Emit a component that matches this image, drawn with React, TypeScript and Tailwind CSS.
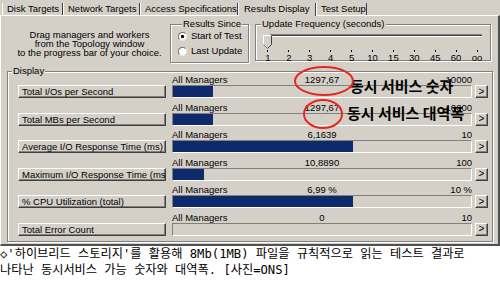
import React from "react";

interface MetricRow {
  name: string;
  value: string;
  max: string;
  fill: number;
}

const rows: MetricRow[] = [
  { name: "Total I/Os per Second", value: "1297,67", max: "10000", fill: 40 },
  { name: "Total MBs per Second", value: "1297,67", max: "10000", fill: 40 },
  { name: "Average I/O Response Time (ms)", value: "6,1639", max: "10", fill: 180 },
  { name: "Maximum I/O Response Time (ms)", value: "10,8890", max: "100", fill: 31 },
  { name: "% CPU Utilization (total)", value: "6,99 %", max: "10 %", fill: 180 },
  { name: "Total Error Count", value: "0", max: "10", fill: 0 },
];

const tabs = [
  { label: "Disk Targets", w: "w-[61px]" },
  { label: "Network Targets", w: "w-[77px]" },
  { label: "Access Specifications", w: "w-[98px]" },
  { label: "Results Display", w: "w-[78px]", active: true },
  { label: "Test Setup", w: "w-[51px]" },
];

const ticks = ["1", "2", "3", "4", "5", "10", "15", "30", "45", "60", "oo"];

const raised =
  "border border-t-white border-l-white border-r-[#404040] border-b-[#404040] shadow-[inset_-1px_-1px_0_#808080]";
const etched = "border border-[#808080] shadow-[inset_1px_1px_0_#fff,1px_1px_0_#fff]";

function Radio({ checked }: { checked?: boolean }) {
  return (
    <svg width="9" height="9" viewBox="0 0 12 12">
      <circle cx="6" cy="6" r="5" fill="#fff" />
      <path d="M2.1 9.9 A5.5 5.5 0 0 1 9.9 2.1" fill="none" stroke="#707070" strokeWidth="1.4" />
      <path d="M9.9 2.1 A5.5 5.5 0 0 1 2.1 9.9" fill="none" stroke="#e8e6e1" strokeWidth="1.4" />
      {checked && <circle cx="6" cy="6" r="2.2" fill="#000" />}
    </svg>
  );
}

function Thumb() {
  return (
    <svg width="9" height="14" viewBox="0 0 9 14">
      <polygon points="0.5,0.5 8.5,0.5 8.5,9.5 4.5,13.5 0.5,9.5" fill="#d4d0c8" />
      <polyline points="0.5,9.5 0.5,0.5 8.5,0.5" fill="none" stroke="#fff" />
      <polyline points="8.5,0.5 8.5,9.5 4.5,13.5" fill="none" stroke="#404040" />
      <polyline points="0.5,9.5 4.5,13.5" fill="none" stroke="#808080" />
    </svg>
  );
}

function Row({ row }: { row: MetricRow }) {
  return (
    <div className="flex h-[23px] items-end">
      <div className={`${raised} h-[13px] w-[148px] overflow-hidden whitespace-nowrap pl-[3px] leading-[11px]`}>
        {row.name}
      </div>
      <div className="ml-[6px] flex w-[300px] flex-col">
        <div className="flex h-[10px] leading-[10px] whitespace-nowrap">
          <span className="w-[100px]">All Managers</span>
          <span className="w-[100px] text-center">{row.value}</span>
          <span className="w-[100px] text-right">{row.max}</span>
        </div>
        <div className="h-[13px] border border-t-[#808080] border-l-[#808080] border-r-white border-b-white">
          <div className="h-full bg-[#0c2a6c]" style={{ width: row.fill }} />
        </div>
      </div>
      <div className={`${raised} ml-[3px] flex h-[13px] w-[13px] items-center justify-center text-[10px] leading-none`}>
        &gt;
      </div>
    </div>
  );
}

export default function App() {
  return (
    <div className="relative h-[288px] w-[500px] overflow-hidden bg-white font-['Liberation_Sans',Arial,sans-serif] text-[9.5px] text-black">
      <div className="flex h-[246px] flex-col bg-[#d4d0c8]">
        {/* tab strip */}
        <div className="flex h-[15px] items-end pl-[2px]">
          {tabs.map((t) => (
            <div
              key={t.label}
              className={`${t.w} h-[12px] whitespace-nowrap border-l border-r border-l-white border-r-[#404040] pl-[4px] leading-[11px] ${
                t.active ? "relative z-10 -mb-px h-[13px] bg-[#d4d0c8] pl-[5px]" : ""
              }`}
            >
              {t.label}
            </div>
          ))}
        </div>

        <div className="flex flex-1 flex-col border-t border-l border-t-white border-l-white border-r-2 border-b-2 border-r-[#505050] border-b-[#505050]">
          {/* top area */}
          <div className="flex h-[50px] items-start">
            <div className="w-[169px] pl-[8px] pt-[13.5px] text-center leading-[9px]">
              <div>Drag managers and workers</div>
              <div>from the Topology window</div>
              <div>to the progress bar of your choice.</div>
            </div>

            <fieldset className={`${etched} mt-[3px] h-[44px] w-[79px] pl-[7px]`}>
              <legend className="ml-[4px] bg-[#d4d0c8] px-[1px] leading-[10px]">Results Since</legend>
              <div className="flex h-[15px] items-center gap-[4px]">
                <Radio checked />
                <span>Start of Test</span>
              </div>
              <div className="flex h-[15px] items-center gap-[4px]">
                <Radio />
                <span>Last Update</span>
              </div>
            </fieldset>

            <fieldset className={`${etched} ml-[6px] mt-[3px] h-[42px] w-[236px]`}>
              <legend className="ml-[5px] bg-[#d4d0c8] px-[1px] leading-[10px]">Update Frequency (seconds)</legend>
              <div className="relative h-[16px]">
                <div className="ml-[14px] mt-[5px] h-[3px] w-[212px] border-t border-b border-t-[#808080] border-b-white bg-[#404040]" />
                <div className="absolute left-[7px] top-[1px]">
                  <Thumb />
                </div>
              </div>
              <div className="ml-[1.5px] grid w-[230px] grid-cols-11">
                {ticks.map((t) => (
                  <div key={t} className="flex flex-col items-center">
                    <div className="h-[2px] w-px bg-black" />
                    <div className="mt-[1px] leading-[10px]">{t}</div>
                  </div>
                ))}
              </div>
            </fieldset>
          </div>

          {/* display */}
          <fieldset className={`${etched} mx-[6px] h-[176px] w-[486px]`}>
            <legend className="ml-[4px] bg-[#d4d0c8] px-[1px] leading-[10px]">Display</legend>
            <div className="-mt-px flex flex-col gap-[4.6px] pl-[10px]">
              {rows.map((r) => (
                <Row key={r.name} row={r} />
              ))}
            </div>
          </fieldset>
        </div>
      </div>

      <div className="font-['DejaVu_Sans_Mono','Noto_Sans_CJK_KR',monospace] text-[12.2px] leading-[16px] whitespace-nowrap">
        <div>◇'하이브리드 스토리지'를 활용해 8Mb(1MB) 파일을 규칙적으로 읽는 테스트 결과로</div>
        <div>나타난 동시서비스 가능 숫자와 대역폭. [사진=ONS]</div>
      </div>

      {/* annotations */}
      <span className="absolute left-[350px] top-[78px] font-['Noto_Sans_CJK_KR',sans-serif] text-[15px] font-bold leading-[15px] whitespace-nowrap">
        동시 서비스 숫자
      </span>
      <span className="absolute left-[347px] top-[105px] font-['Noto_Sans_CJK_KR',sans-serif] text-[15px] font-bold leading-[15px] whitespace-nowrap">
        동시 서비스 대역폭
      </span>
      <svg className="pointer-events-none absolute left-0 top-0" width="500" height="288">
        <ellipse cx="324" cy="81" rx="29" ry="14" fill="none" stroke="#e8261f" strokeWidth="2" />
        <ellipse cx="323" cy="114" rx="19" ry="14" fill="none" stroke="#e8261f" strokeWidth="2" />
      </svg>
    </div>
  );
}
